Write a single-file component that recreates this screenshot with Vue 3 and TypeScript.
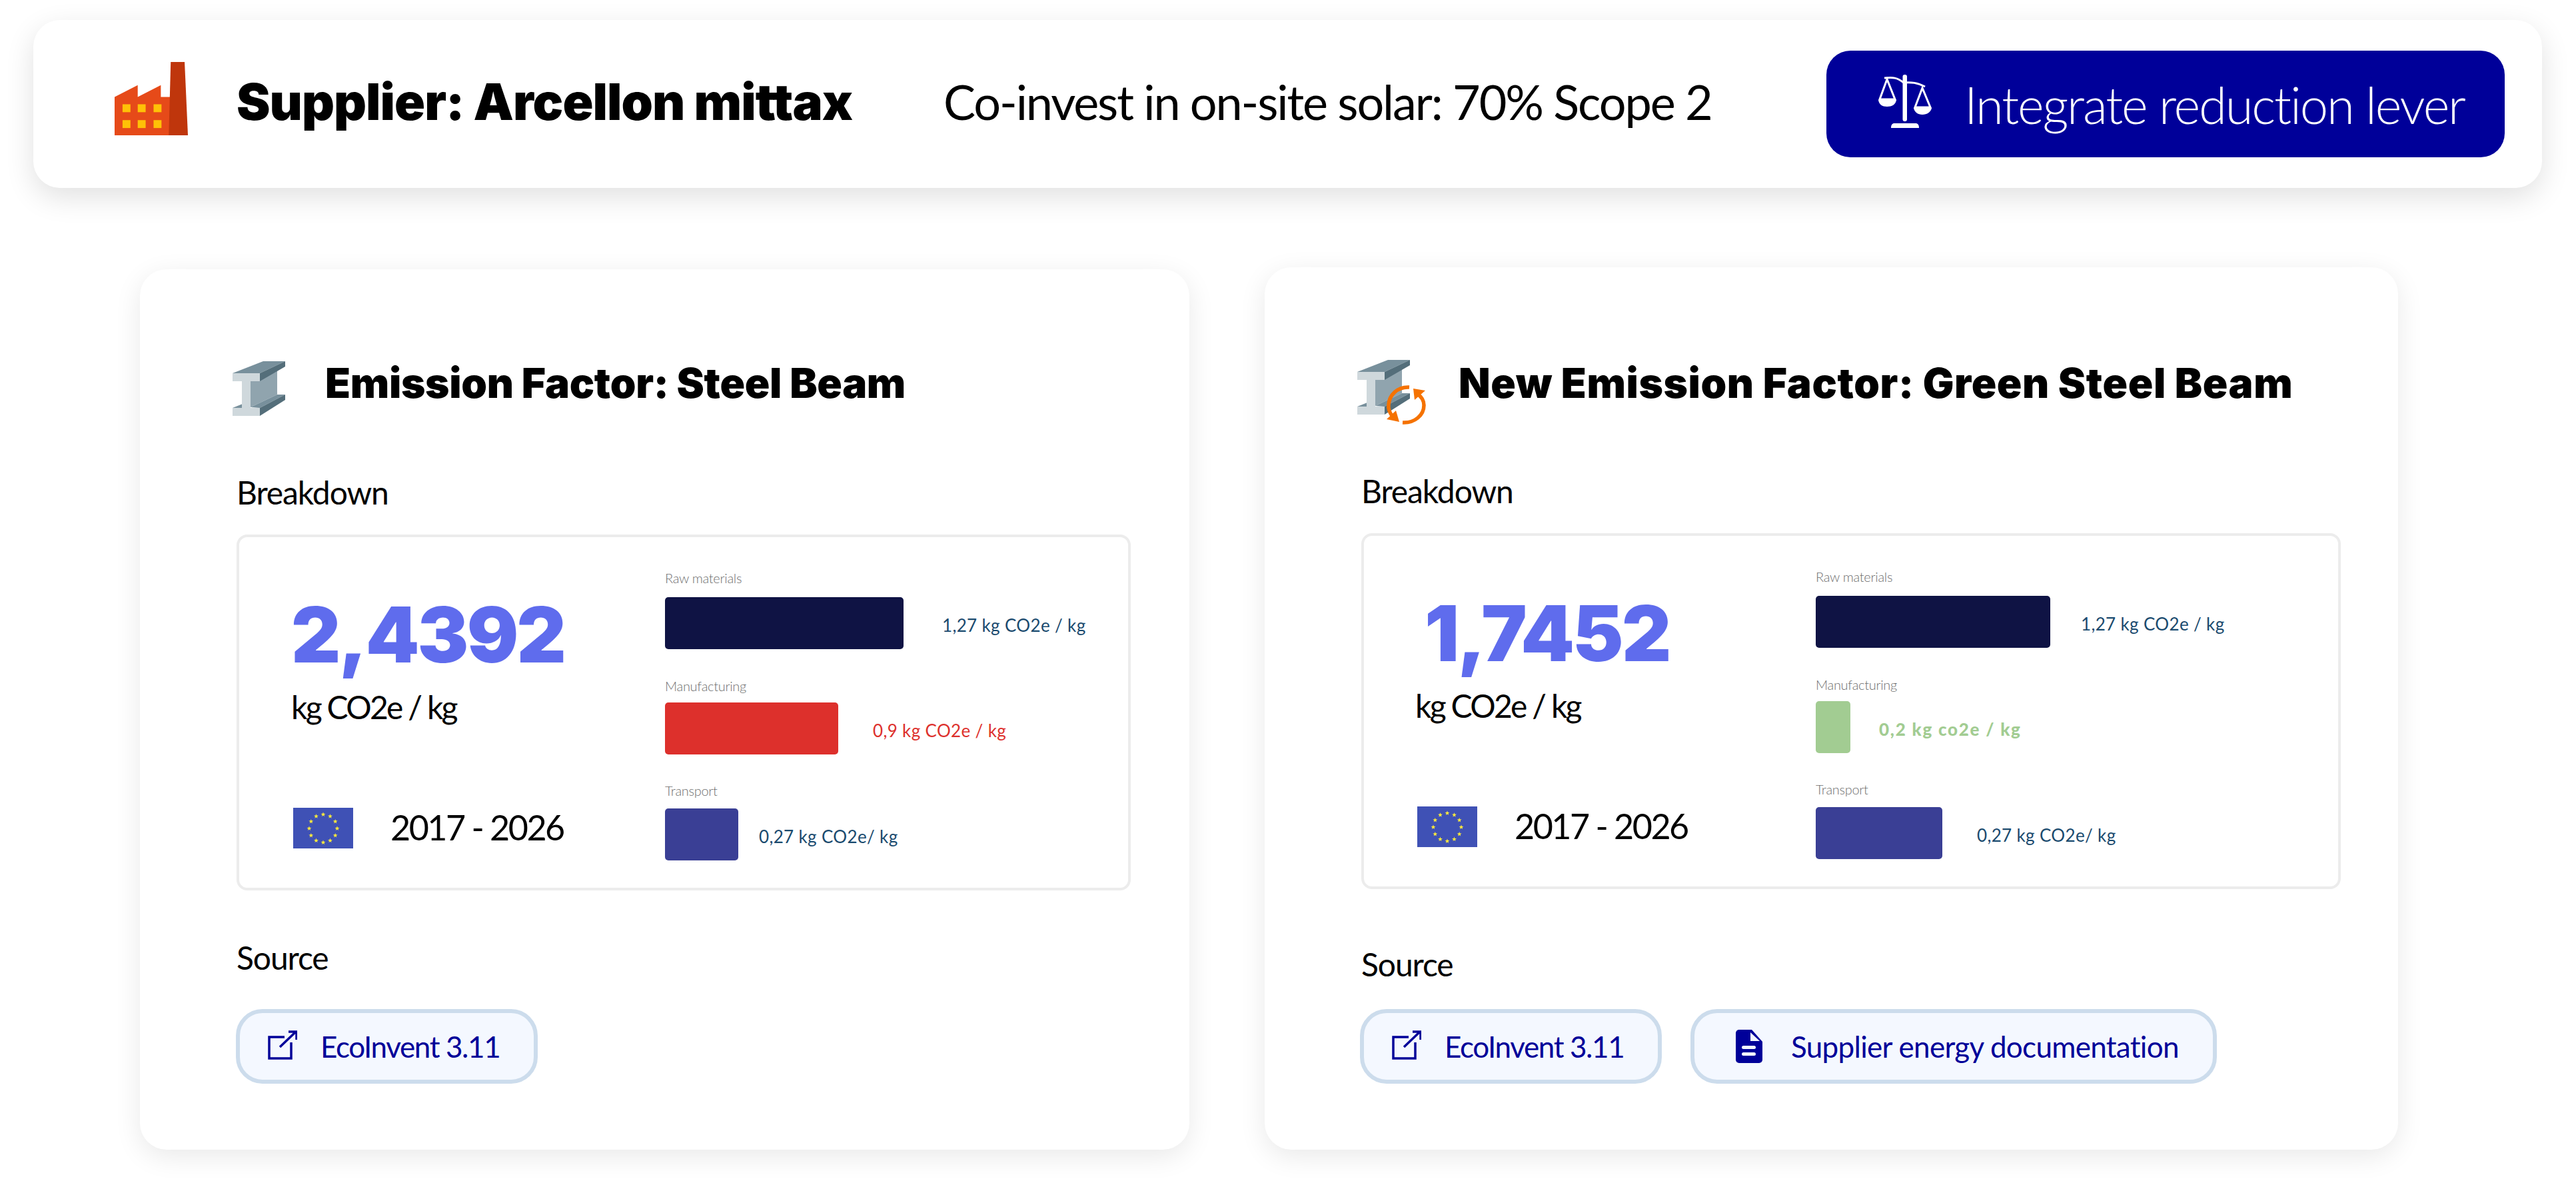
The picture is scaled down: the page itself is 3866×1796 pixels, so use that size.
<template>
  <div class="page">
    <header class="topbar">
      <svg class="factory" viewBox="32 22 112 112">
        <path fill="#e64a19" d="M32 75 67 57V75L102 57V75H116V133H32Z" />
        <path fill="#bf360c" d="M117 22H138L143 133H114Z" />
        <g fill="#ffc107">
          <template v-for="y in [86, 110]" :key="y">
            <rect v-for="x in [44, 67, 91]" :key="x" :x="x" :y="y" width="12" height="12" />
          </template>
        </g>
      </svg>
      <h1 class="supplier">Supplier: Arcellon mittax</h1>
      <p class="lever">Co-invest in on-site solar: 70% Scope 2</p>
      <button class="integrate">
        <svg class="scale" viewBox="37 33 82 82">
          <g fill="none" stroke="#fff" stroke-width="3">
            <path d="M47 39C60 38 66 38 76 46 88 45 96 46 108 52" />
            <path d="M51 41 40 71H63Z M104 54 93 83H116Z" />
          </g>
          <g fill="#fff">
            <rect x="74.5" y="34" width="6.5" height="70" rx="3" />
            <path d="M57 114C57 109 59 107 62 107H94C97 107 99 109 99 114Z" />
            <path d="M38 72H65C64 79 58 82 51 82S39 79 38 72Z" />
            <path d="M91 84H118C117 90 111 94 104 94S92 90 91 84Z" />
          </g>
        </svg>
        <span>Integrate reduction lever</span>
      </button>
    </header>

    <main class="cards">
      <section v-for="card in cards" :key="card.id" class="card" :class="card.id">
        <div class="card-head">
          <svg v-if="card.id === 'current'" class="beam" viewBox="29 42 79 82">
            <use href="#steel-beam" />
          </svg>
          <svg v-else class="beam-new" viewBox="18 39 103 97">
            <g transform="translate(-11 -3)"><use href="#steel-beam" /></g>
            <g fill="none" stroke="#f57200" stroke-width="5.5">
              <path d="M96 80C78 79 66 92 65 106 64 113 67 119 71 124" />
              <path d="M86 133C104 134 118 122 118 107 118 100 114 94 108 90" />
            </g>
            <g fill="#f57200">
              <path d="M62 128 81 132 76 115Z" />
              <path d="M102 82 120 85 104 99Z" />
            </g>
          </svg>
          <h2 class="card-title">{{ card.title }}</h2>
        </div>

        <div class="section-label">Breakdown</div>
        <div class="box">
          <div class="summary">
            <div class="total">{{ card.total }}</div>
            <div class="unit">kg CO2e / kg</div>
            <div class="period">
              <svg class="flag" viewBox="0 0 90 61">
                <rect width="90" height="61" fill="#3f51b5" />
                <polygon v-for="(s, i) in stars" :key="i" :points="s" fill="#ffeb3b" />
              </svg>
              <span class="years">2017 - 2026</span>
            </div>
          </div>
          <div class="rows">
            <div v-for="row in card.rows" :key="row.label" class="row">
              <div class="row-label">{{ row.label }}</div>
              <div class="row-line">
                <div class="bar" :style="{ width: row.width + 'px', background: row.color }"></div>
                <span
                  class="row-value"
                  :class="{ strong: row.strong }"
                  :style="{ marginLeft: row.gap + 'px', color: row.textColor }"
                >{{ row.value }}</span>
              </div>
            </div>
          </div>
        </div>

        <div class="section-label source">Source</div>
        <div class="chips">
          <a class="chip eco">
            <svg class="ext" viewBox="0 0 44 44" fill="none" stroke="#000099" stroke-width="3.5">
              <path d="M25 10H2V42H35V18" />
              <path d="M18 25 42 2M31 2H43V14" />
            </svg>
            <span>EcoInvent 3.11</span>
          </a>
          <a v-if="card.id === 'next'" class="chip doc">
            <svg class="doc-icon" viewBox="0 0 40 50">
              <path fill="#000099" d="M5 0H24L40 18V45A5 5 0 0 1 35 50H5A5 5 0 0 1 0 45V5A5 5 0 0 1 5 0Z" />
              <path fill="#f4f8ff" d="M22 4V17H36Z" />
              <rect x="9" y="24" width="21" height="5" rx="2.5" fill="#f4f8ff" />
              <rect x="9" y="34" width="21" height="5" rx="2.5" fill="#f4f8ff" />
            </svg>
            <span>Supplier energy documentation</span>
          </a>
        </div>
      </section>
    </main>

    <svg class="defs" width="0" height="0">
      <defs>
        <g id="steel-beam">
          <path fill="#90a4ae" d="M56 72 96 55V92L56 111Z" />
          <path fill="#78909c" d="M29 60 75 42H108L70 60Z" />
          <path fill="#546e7a" d="M70 60 108 42V50L70 72Z" />
          <path fill="#78909c" d="M56 111 96 92H108L70 112Z M29 112 44 106V112Z" />
          <path fill="#546e7a" d="M70 112 108 92V100L70 124Z" />
          <path fill="#cfd8dc" d="M29 60H70V72H56V112H70V124H29V112H43V72H29Z" />
        </g>
      </defs>
    </svg>
  </div>
</template>

<script setup lang="ts">
interface Row {
  label: string
  value: string
  width: number
  gap: number
  color: string
  textColor: string
  strong?: boolean
}

interface Card {
  id: string
  title: string
  total: string
  rows: Row[]
}

const NAVY = '#0f1344'
const INDIGO = '#3a3f95'
const TEAL = '#1a4a6e'

const cards: Card[] = [
  {
    id: 'current',
    title: 'Emission Factor: Steel Beam',
    total: '2,4392',
    rows: [
      { label: 'Raw materials', value: '1,27 kg CO2e / kg', width: 358, gap: 58, color: NAVY, textColor: TEAL },
      { label: 'Manufacturing', value: '0,9 kg CO2e / kg', width: 260, gap: 52, color: '#dd302c', textColor: '#dd302c' },
      { label: 'Transport', value: '0,27 kg CO2e/ kg', width: 110, gap: 31, color: INDIGO, textColor: TEAL }
    ]
  },
  {
    id: 'next',
    title: 'New Emission Factor: Green Steel Beam',
    total: '1,7452',
    rows: [
      { label: 'Raw materials', value: '1,27 kg CO2e / kg', width: 352, gap: 46, color: NAVY, textColor: TEAL },
      { label: 'Manufacturing', value: '0,2 kg co2e / kg', width: 52, gap: 43, color: '#a2cc92', textColor: '#a2cc92', strong: true },
      { label: 'Transport', value: '0,27 kg CO2e/ kg', width: 190, gap: 52, color: INDIGO, textColor: TEAL }
    ]
  }
]

// 12 stars on a circle for the EU flag
function starPoints(cx: number, cy: number, r: number): string {
  const pts: string[] = []
  for (let i = 0; i < 10; i++) {
    const a = -Math.PI / 2 + (i * Math.PI) / 5
    const d = i % 2 === 0 ? r : r * 0.42
    pts.push(`${(cx + d * Math.cos(a)).toFixed(2)},${(cy + d * Math.sin(a)).toFixed(2)}`)
  }
  return pts.join(' ')
}

const stars = Array.from({ length: 12 }, (_, i) => {
  const a = (i * Math.PI) / 6
  return starPoints(45 + 21 * Math.sin(a), 31 - 21 * Math.cos(a), 3.6)
})
</script>

<style>
html,
body {
  margin: 0;
  background: #fff;
}
</style>

<style scoped>
.page {
  width: 3866px;
  height: 1796px;
  box-sizing: border-box;
  padding: 30px 51px 0 50px;
  overflow: hidden;
  font-family: Lato, "Liberation Sans", sans-serif;
  color: #000;
}
.topbar {
  display: flex;
  align-items: center;
  height: 252px;
  box-sizing: border-box;
  padding: 0 56px 0 122px;
  background: #fff;
  border-radius: 40px;
  box-shadow: 0 14px 44px rgba(0, 0, 0, 0.12);
}
.factory {
  width: 111px;
  height: 111px;
  margin-top: -16px;
  flex: none;
}
.supplier {
  flex: none;
  width: 1061px;
  margin: -8px 0 0 72px;
  font-family: Inter, sans-serif;
  font-size: 76px;
  font-weight: 900;
  letter-spacing: -1px;
  white-space: nowrap;
}
.lever {
  margin: -8px 0 0;
  font-size: 72px;
  font-weight: 400;
  letter-spacing: -2.1px;
  white-space: nowrap;
}
.integrate {
  display: flex;
  align-items: center;
  width: 1018px;
  height: 160px;
  margin-left: auto;
  padding: 0 0 0 77px;
  border: 0;
  border-radius: 36px;
  background: #000099;
  color: #fff;
  font-family: inherit;
  font-size: 76px;
  font-weight: 300;
  letter-spacing: -2.15px;
  white-space: nowrap;
}
.scale {
  width: 82px;
  height: 82px;
  margin-right: 48px;
  margin-top: -8px;
  flex: none;
}

.cards {
  display: flex;
  gap: 113px;
  margin: 119px 0 0 160px;
}
.card {
  box-sizing: border-box;
  background: #fff;
  border-radius: 40px;
  box-shadow: 0 10px 40px rgba(0, 0, 0, 0.09);
}
.card.current {
  width: 1575px;
  height: 1321px;
  margin-top: 3px;
  padding: 138px 88px 0 145px;
}
.card.next {
  width: 1701px;
  height: 1324px;
  padding: 139px 86px 0 145px;
}
.card-head {
  display: flex;
  align-items: flex-start;
  height: 96px;
  margin-left: -6px;
}
.beam {
  width: 79px;
  height: 82px;
  margin-right: 60px;
  flex: none;
}
.beam-new {
  width: 103px;
  height: 97px;
  margin-right: 49px;
  flex: none;
}
.card-title {
  margin: -3px 0 0;
  font-family: Inter, sans-serif;
  font-size: 62px;
  line-height: 72px;
  font-weight: 900;
  letter-spacing: -0.3px;
  white-space: nowrap;
}
.next .card-title {
  margin-top: -1px;
  letter-spacing: 0.6px;
}
.section-label {
  margin-top: 71px;
  font-size: 48px;
  line-height: 60px;
  letter-spacing: -1.1px;
}
.box {
  display: flex;
  height: 534px;
  box-sizing: border-box;
  margin-top: 33px;
  padding-top: 49px;
  border: 4px solid #ececec;
  border-radius: 16px;
}
.section-label.source {
  margin-top: 71px;
}
.next .section-label.source {
  margin-top: 83px;
}
.chips {
  display: flex;
  gap: 43px;
  margin: 47px 0 0 -1px;
}
.next .chips {
  margin: 37px 0 0 -2px;
}
.summary {
  flex: none;
  box-sizing: border-box;
  width: 639px;
  padding-left: 78px;
}
.next .summary {
  width: 678px;
  padding-left: 77px;
}
.total {
  margin-top: 38px;
  font-family: Inter, sans-serif;
  font-size: 115px;
  line-height: 120px;
  font-weight: 900;
  letter-spacing: -2.8px;
  color: #5f6ced;
}
.next .total {
  margin-left: 14px;
}
.unit {
  margin-top: 18px;
  font-size: 48px;
  line-height: 60px;
  letter-spacing: -2.7px;
}
.period {
  display: flex;
  align-items: center;
  margin: 121px 0 0 3px;
}
.flag {
  width: 90px;
  height: 61px;
  margin-right: 56px;
  flex: none;
}
.years {
  font-size: 52px;
  line-height: 61px;
  margin-top: -3px;
  letter-spacing: -2.5px;
}
.row:nth-child(2) {
  margin-top: 43px;
}
.row:nth-child(3) {
  margin-top: 42px;
}
.row-label {
  font-size: 20px;
  line-height: 24px;
  margin-bottom: 17px;
  font-weight: 300;
  letter-spacing: -0.3px;
  color: #6f6f6f;
}
.row:nth-child(2) .row-label {
  margin-bottom: 13px;
}
.row:nth-child(3) .row-label {
  margin-bottom: 15px;
}
.row-line {
  display: flex;
  align-items: center;
}
.bar {
  height: 78px;
  border-radius: 5px;
  flex: none;
}
.row-value {
  padding-top: 6px;
  font-size: 26px;
  letter-spacing: 0.35px;
  white-space: nowrap;
}
.row-value.strong {
  font-weight: 900;
  letter-spacing: 1.75px;
}
.chip {
  display: flex;
  align-items: center;
  height: 112px;
  box-sizing: border-box;
  border: 6px solid #ccdcec;
  border-radius: 40px;
  background: #f4f8ff;
  color: #000099;
  font-size: 44px;
  white-space: nowrap;
}
.chip.eco {
  width: 453px;
  padding-left: 42px;
  letter-spacing: -1.4px;
}
.chip.doc {
  width: 790px;
  padding-left: 62px;
  letter-spacing: -0.7px;
}
.ext {
  width: 44px;
  height: 44px;
  margin-right: 35px;
  margin-top: -4px;
  flex: none;
}
.doc-icon {
  width: 40px;
  height: 50px;
  margin-right: 43px;
  flex: none;
}
.defs {
  position: absolute;
}
</style>
